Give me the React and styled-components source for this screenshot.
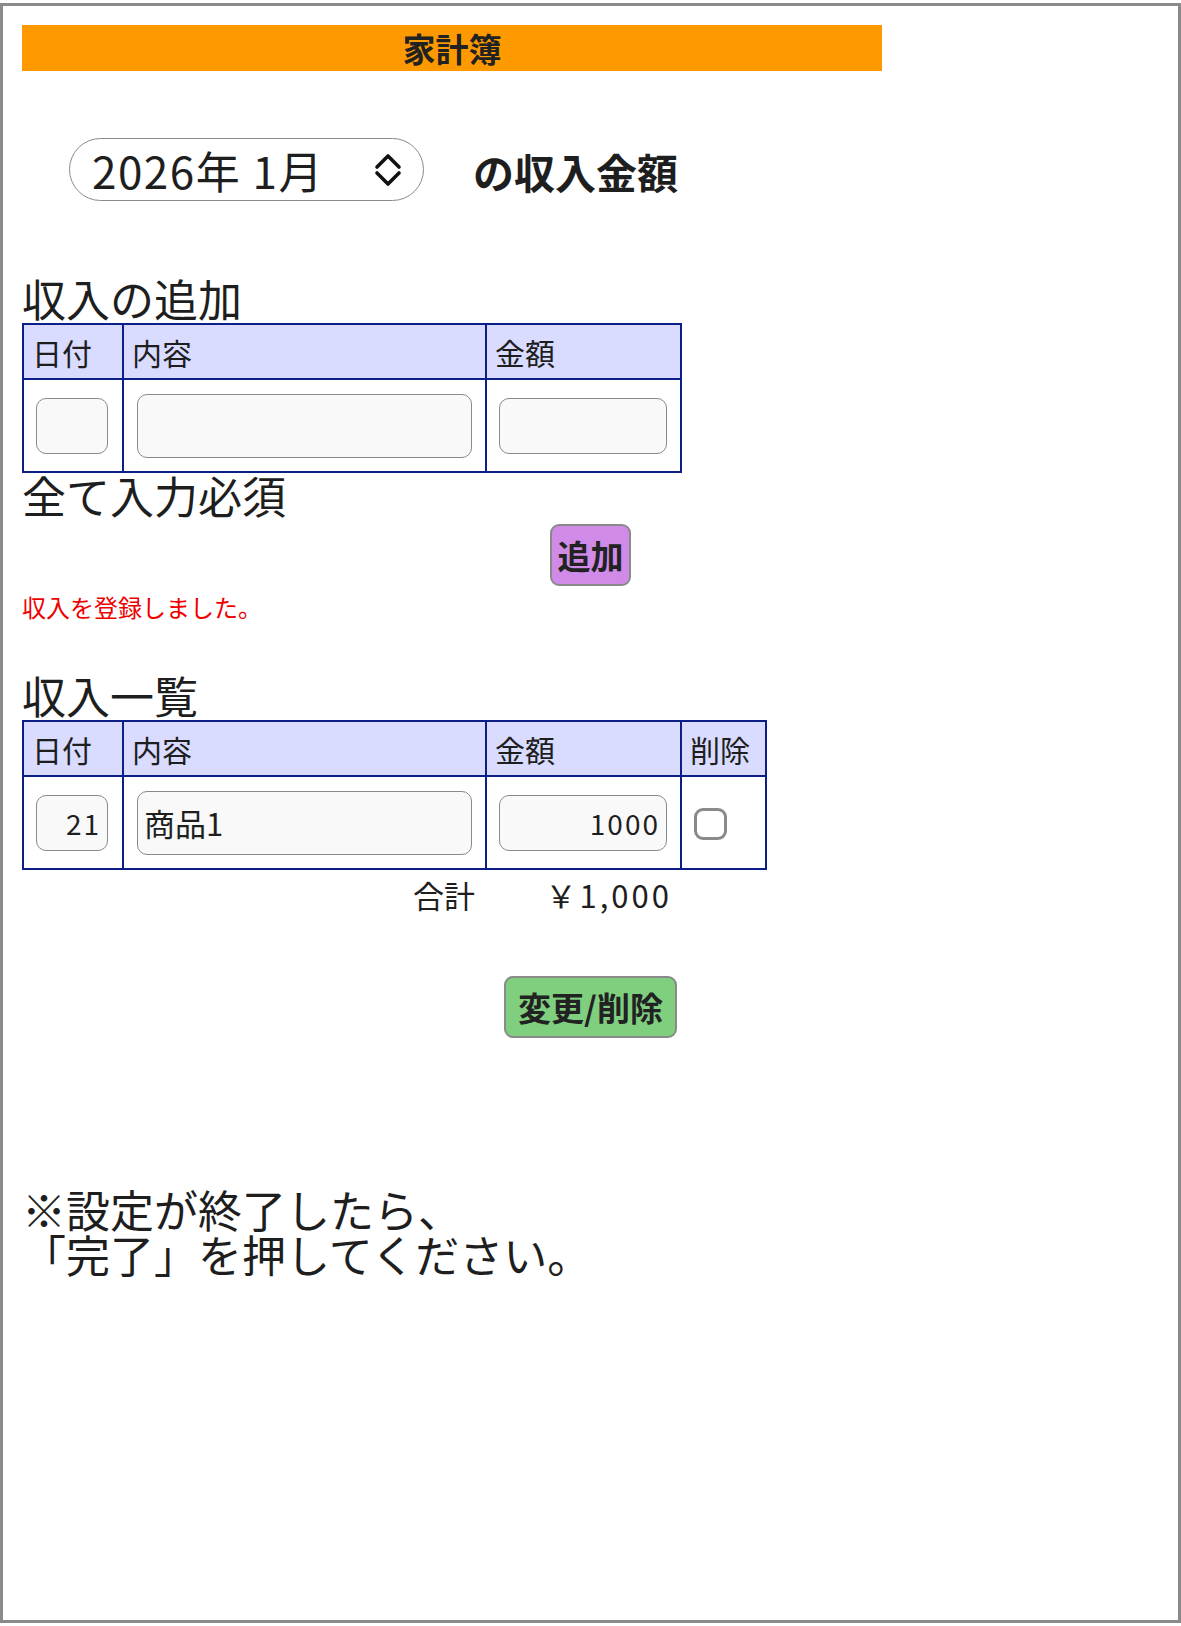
import React from "react";
import styled, { createGlobalStyle } from "styled-components";

const GlobalStyle = createGlobalStyle`
  html, body {
    margin: 0;
    padding: 0;
    background: #fff;
  }
  body {
    font-family: "Noto Sans CJK JP", "Noto Sans", sans-serif;
    color: #1e1e1e;
  }
`;

const Frame = styled.div`
  box-sizing: border-box;
  width: 1181px;
  height: 1620px;
  margin-top: 3px;
  border: 3px solid #8a8a8a;
  padding: 19px;
`;

const TitleBar = styled.h1`
  margin: 0;
  width: 860px;
  height: 46px;
  background: #ff9900;
  color: #222;
  font-size: 33px;
  font-weight: 700;
  line-height: 46px;
  text-align: center;
`;

const MonthRow = styled.div`
  display: flex;
  align-items: center;
  gap: 49px;
  margin: 67px 0 0 47px;
`;

const MonthPicker = styled.div`
  box-sizing: border-box;
  width: 355px;
  height: 63px;
  display: flex;
  align-items: center;
  justify-content: space-between;
  padding: 0 20px 0 22px;
  border: 1.5px solid #8a8a8a;
  border-radius: 32px;
  font-size: 44px;
  line-height: 1;
  letter-spacing: 1.5px;
`;

const MonthLabel = styled.span`
  font-weight: 700;
  font-size: 41px;
  line-height: 1;
  margin-top: 4px;
`;

const Heading = styled.h2`
  margin: ${(p) => p.$top}px 0 3px;
  font-size: 44px;
  font-weight: 400;
  line-height: 44px;
`;

const Note = styled.p`
  margin: ${(p) => p.$top || 0}px 0 0;
  font-size: 44px;
  line-height: ${(p) => p.$lh || 44}px;
`;

const Grid = styled.table`
  border-collapse: collapse;
  table-layout: fixed;
  width: ${(p) => p.$width}px;
  border: 2px solid #0b1f86;
`;

const Head = styled.th`
  height: 53px;
  padding: 0 0 0 8px;
  border: 2px solid #0b1f86;
  background: #d9dbff;
  font-size: 30px;
  font-weight: 400;
  text-align: left;
  line-height: 1;
`;

const Cell = styled.td`
  height: 91px;
  padding: 0 12px;
  border: 2px solid #0b1f86;
  vertical-align: middle;
`;

const Field = styled.input`
  box-sizing: border-box;
  display: block;
  width: ${(p) => p.$w}px;
  height: ${(p) => p.$h || 56}px;
  margin: 0 ${(p) => (p.$w > 300 ? 1 : 0)}px;
  padding: 0 6px;
  border: 1.5px solid #8a8a8a;
  border-radius: 10px;
  background: #f9f9f9;
  color: #1e1e1e;
  font-family: "Noto Sans CJK JP", "Noto Sans", sans-serif;
  font-size: ${(p) => p.$fs || 28}px;
  letter-spacing: ${(p) => (p.$num ? 2 : 0)}px;
  text-align: ${(p) => (p.$num ? "right" : "left")};
  outline: none;
`;

const Check = styled.input`
  appearance: none;
  display: block;
  width: 33px;
  height: 32px;
  margin: 2px 0 0 0;
  border: 3px solid #8a8a8a;
  border-radius: 9px;
  background: #fff;
`;

const ButtonRow = styled.div`
  display: flex;
  justify-content: center;
  margin-top: ${(p) => p.$top}px;
`;

const ActionButton = styled.button`
  box-sizing: border-box;
  width: ${(p) => p.$w}px;
  height: 62px;
  padding: 0;
  border: 2px solid #8a8a8a;
  border-radius: 9px;
  background: ${(p) => p.$bg};
  color: #222;
  font-family: "Noto Sans CJK JP", "Noto Sans", sans-serif;
  font-size: 33px;
  font-weight: 700;
  line-height: 1;
`;

const Message = styled.p`
  margin: 9px 0 0;
  color: #ee0000;
  font-size: 24px;
  line-height: 24px;
`;

const TotalRow = styled.div`
  display: flex;
  width: 658px;
  margin-top: 9px;
  font-size: 31px;
  line-height: 32px;
`;

const TotalCell = styled.span`
  box-sizing: border-box;
  width: ${(p) => p.$w}px;
  padding-right: ${(p) => p.$pr}px;
  letter-spacing: ${(p) => p.$ls || 0}px;
  text-align: right;
`;

const Chevrons = () => (
  <svg width="30" height="34" viewBox="0 0 30 34" fill="none" stroke="#111" strokeWidth="3.6" strokeLinecap="round" strokeLinejoin="round">
    <polyline points="4,14 15,3 26,14" />
    <polyline points="4,20 15,31 26,20" />
  </svg>
);

const incomes = [{ day: "21", item: "商品1", amount: "1000" }];

const App = () => {
  const total = incomes.reduce((sum, r) => sum + Number(r.amount), 0);

  return (
    <>
      <GlobalStyle />
      <Frame>
        <TitleBar>家計簿</TitleBar>

        <MonthRow>
          <MonthPicker>
            <span>2026年 1月</span>
            <Chevrons />
          </MonthPicker>
          <MonthLabel>の収入金額</MonthLabel>
        </MonthRow>

        <Heading $top={75}>収入の追加</Heading>
        <Grid $width={658}>
          <colgroup>
            <col style={{ width: 100 }} />
            <col style={{ width: 363 }} />
            <col style={{ width: 195 }} />
          </colgroup>
          <thead>
            <tr>
              <Head>日付</Head>
              <Head>内容</Head>
              <Head>金額</Head>
            </tr>
          </thead>
          <tbody>
            <tr>
              <Cell>
                <Field $w={72} />
              </Cell>
              <Cell>
                <Field $w={335} $h={64} $fs={31} />
              </Cell>
              <Cell>
                <Field $w={168} $num />
              </Cell>
            </tr>
          </tbody>
        </Grid>
        <Note>全て入力必須</Note>

        <ButtonRow $top={7}>
          <ActionButton $w={81} $bg="#d08ae8">追加</ActionButton>
        </ButtonRow>
        <Message>収入を登録しました。</Message>

        <Heading $top={54}>収入一覧</Heading>
        <Grid $width={743}>
          <colgroup>
            <col style={{ width: 100 }} />
            <col style={{ width: 363 }} />
            <col style={{ width: 195 }} />
            <col style={{ width: 85 }} />
          </colgroup>
          <thead>
            <tr>
              <Head>日付</Head>
              <Head>内容</Head>
              <Head>金額</Head>
              <Head>削除</Head>
            </tr>
          </thead>
          <tbody>
            {incomes.map((r) => (
              <tr key={r.day + r.item}>
                <Cell>
                  <Field $w={72} $num defaultValue={r.day} />
                </Cell>
                <Cell>
                  <Field $w={335} $h={64} $fs={31} defaultValue={r.item} />
                </Cell>
                <Cell>
                  <Field $w={168} $num defaultValue={r.amount} />
                </Cell>
                <Cell>
                  <Check type="checkbox" />
                </Cell>
              </tr>
            ))}
          </tbody>
        </Grid>
        <TotalRow>
          <TotalCell $w={463} $pr={10}>合計</TotalCell>
          <TotalCell $w={195} $pr={8} $ls={3}>
            ￥{total.toLocaleString("ja-JP")}
          </TotalCell>
        </TotalRow>

        <ButtonRow $top={65}>
          <ActionButton $w={173} $bg="#7fcf7f">変更/削除</ActionButton>
        </ButtonRow>

        <Note $top={149} $lh={45}>
          ※設定が終了したら、
          <br />
          「完了」を押してください。
        </Note>
      </Frame>
    </>
  );
};

export default App;
